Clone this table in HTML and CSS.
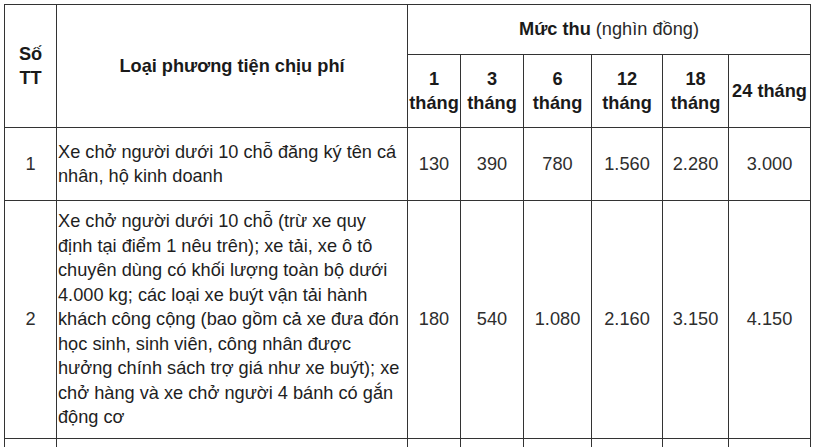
FILE: index.html
```html
<!DOCTYPE html>
<html lang="vi">
<head>
<meta charset="utf-8">
<link rel="stylesheet" href="styles.css">
</head>
<body>
<div class="fee-table">
  <div class="cell head stt">Số<br>TT</div>
  <div class="cell head type">Loại phương tiện chịu phí</div>
  <div class="cell head group"><b>Mức thu</b> (nghìn đồng)</div>
  <div class="cell head month">1<br>tháng</div>
  <div class="cell head month">3<br>tháng</div>
  <div class="cell head month">6<br>tháng</div>
  <div class="cell head month">12<br>tháng</div>
  <div class="cell head month">18<br>tháng</div>
  <div class="cell head month">24 tháng</div>

  <div class="cell num">1</div>
  <div class="cell desc">Xe chở người dưới 10 chỗ đăng ký tên cá nhân, hộ kinh doanh</div>
  <div class="cell num">130</div>
  <div class="cell num">390</div>
  <div class="cell num">780</div>
  <div class="cell num">1.560</div>
  <div class="cell num">2.280</div>
  <div class="cell num">3.000</div>

  <div class="cell num">2</div>
  <div class="cell desc">Xe chở người dưới 10 chỗ (trừ xe quy định tại điểm 1 nêu trên); xe tải, xe ô tô chuyên dùng có khối lượng toàn bộ dưới 4.000 kg; các loại xe buýt vận tải hành khách công cộng (bao gồm cả xe đưa đón học sinh, sinh viên, công nhân được hưởng chính sách trợ giá như xe buýt); xe chở hàng và xe chở người 4 bánh có gắn động cơ</div>
  <div class="cell num">180</div>
  <div class="cell num">540</div>
  <div class="cell num">1.080</div>
  <div class="cell num">2.160</div>
  <div class="cell num">3.150</div>
  <div class="cell num">4.150</div>

  <div class="cell num"></div>
  <div class="cell desc"></div>
  <div class="cell num"></div>
  <div class="cell num"></div>
  <div class="cell num"></div>
  <div class="cell num"></div>
  <div class="cell num"></div>
  <div class="cell num"></div>
</div>
</body>
</html>
```

FILE: styles.css
```css
html, body {
  margin: 0;
  padding: 0;
  background: #ffffff;
}

body {
  padding: 4px 0 0 4px;
  font-family: "Liberation Sans", Arial, sans-serif;
  font-size: 18.2px;
  color: #1e1e1e;
  overflow: hidden;
}

.fee-table {
  display: grid;
  grid-template-columns: 51px 350px 52px 62px 67px 70px 65px 81px;
  grid-template-rows: 49px 72px 72px 237px 60px;
  gap: 1px;
  padding: 1px;
  width: max-content;
  background: #333333;
}

.cell {
  background: #ffffff;
  display: flex;
  align-items: center;
  justify-content: center;
  text-align: center;
  line-height: 24.5px;
  padding: 0 1px;
}

.head {
  font-weight: bold;
  color: #1a1a1a;
}

.stt {
  grid-row: 1 / 3;
}

.type {
  grid-row: 1 / 3;
}

.group {
  grid-column: 3 / 9;
  font-weight: normal;
  color: #2a2a2a;
}

.group b {
  color: #1a1a1a;
  margin-right: 5px;
}

.num {
  color: #2e2e2e;
}

.desc {
  justify-content: flex-start;
  text-align: left;
  padding: 0 6px 0 1px;
  color: #1e1e1e;
}
```
